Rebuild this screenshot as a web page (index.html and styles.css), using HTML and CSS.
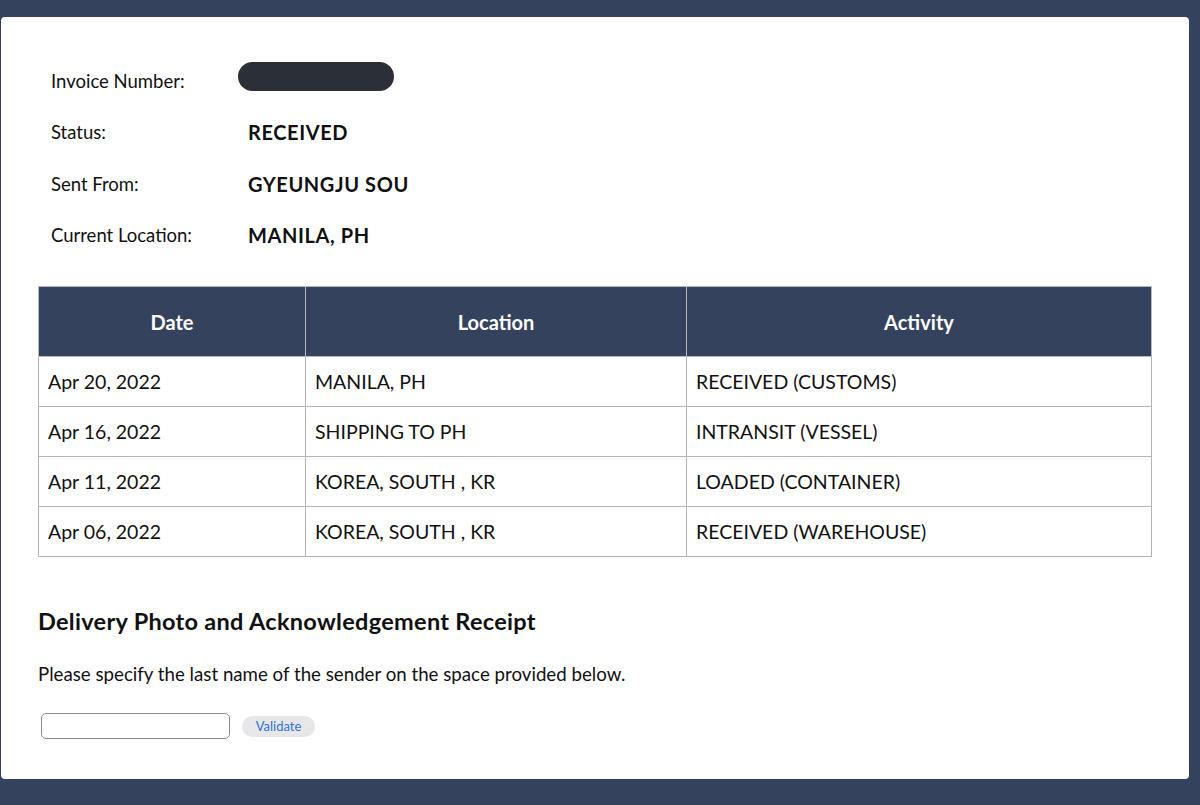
FILE: index.html
```html
<!DOCTYPE html>
<html lang="en">
<head>
  <meta charset="UTF-8" />
  <meta name="viewport" content="width=device-width, initial-scale=1.0" />
  <title>Tracking</title>
  <link rel="stylesheet" href="styles.css">
</head>
<body>
  <div class="card">
    <div class="info">
      <div class="info-row">
        <span class="label">Invoice Number:</span>
        <span class="redacted"></span>
      </div>
      <div class="info-row">
        <span class="label">Status:</span>
        <span class="value">RECEIVED</span>
      </div>
      <div class="info-row">
        <span class="label">Sent From:</span>
        <span class="value">GYEUNGJU SOU</span>
      </div>
      <div class="info-row">
        <span class="label">Current Location:</span>
        <span class="value">MANILA, PH</span>
      </div>
    </div>

    <table class="history">
      <thead>
        <tr>
          <th class="col-date">Date</th>
          <th class="col-loc">Location</th>
          <th>Activity</th>
        </tr>
      </thead>
      <tbody>
        <tr>
          <td>Apr 20, 2022</td>
          <td>MANILA, PH</td>
          <td>RECEIVED (CUSTOMS)</td>
        </tr>
        <tr>
          <td>Apr 16, 2022</td>
          <td>SHIPPING TO PH</td>
          <td>INTRANSIT (VESSEL)</td>
        </tr>
        <tr>
          <td>Apr 11, 2022</td>
          <td>KOREA, SOUTH , KR</td>
          <td>LOADED (CONTAINER)</td>
        </tr>
        <tr>
          <td>Apr 06, 2022</td>
          <td>KOREA, SOUTH , KR</td>
          <td>RECEIVED (WAREHOUSE)</td>
        </tr>
      </tbody>
    </table>

    <h2>Delivery Photo and Acknowledgement Receipt</h2>
    <p class="note">Please specify the last name of the sender on the space provided below.</p>
    <div class="validate">
      <input type="text" class="name-input" />
      <button class="btn">Validate</button>
    </div>
  </div>
</body>
</html>
```

FILE: styles.css
```css
body {
  margin: 0;
  background-color: #34425e;
  font-family: Lato, "Noto Sans", sans-serif;
  color: #111;
  height: 805px;
  overflow: hidden;
}
.card {
  background: #fff;
  margin: 17px 11px 0 1px;
  height: 762px;
  border-radius: 4px;
  padding: 0 37px 0 37px;
  box-sizing: border-box;
}
.info {
  padding: 38px 0 0 13px;
}
.info-row {
  display: flex;
  align-items: center;
  height: 51.5px;
  font-size: 18.5px;
}
.label {
  width: 197px;
}
.value {
  font-weight: bold;
  font-size: 20px;
  letter-spacing: 0.6px;
}
.redacted {
  display: inline-block;
  width: 156px;
  height: 29px;
  border-radius: 15px;
  background: #2b2f36;
  margin-left: -10px;
  margin-bottom: 8px;
}
.history {
  margin-top: 25px;
  width: 1114px;
  border-collapse: collapse;
  font-size: 19.5px;
}
.history th {
  background: #34425e;
  color: #fff;
  font-weight: bold;
  font-size: 20px;
  height: 69px;
  border: 1px solid #b5b8bf;
  padding: 0;
}
.history td {
  height: 49px;
  border: 1px solid #b5b5b5;
  padding: 0 0 0 9px;
}
.col-date {
  width: 266px;
}
.col-loc {
  width: 380px;
}
h2 {
  font-size: 23.5px;
  font-weight: bold;
  margin: 50px 0 0 0;
  letter-spacing: 0.3px;
}
.note {
  font-size: 18.7px;
  margin: 28px 0 0 0;
}
.validate {
  display: flex;
  align-items: center;
  margin-top: 28px;
  padding-left: 3px;
}
.name-input {
  width: 189px;
  height: 26px;
  box-sizing: border-box;
  border: 1px solid #8c8c8c;
  border-radius: 5px;
}
.btn {
  margin-left: 12px;
  background: #e7e7e9;
  border: none;
  border-radius: 11px;
  height: 21px;
  width: 73px;
  font-family: Lato, sans-serif;
  font-size: 13px;
  color: #2f72d4;
}
```
